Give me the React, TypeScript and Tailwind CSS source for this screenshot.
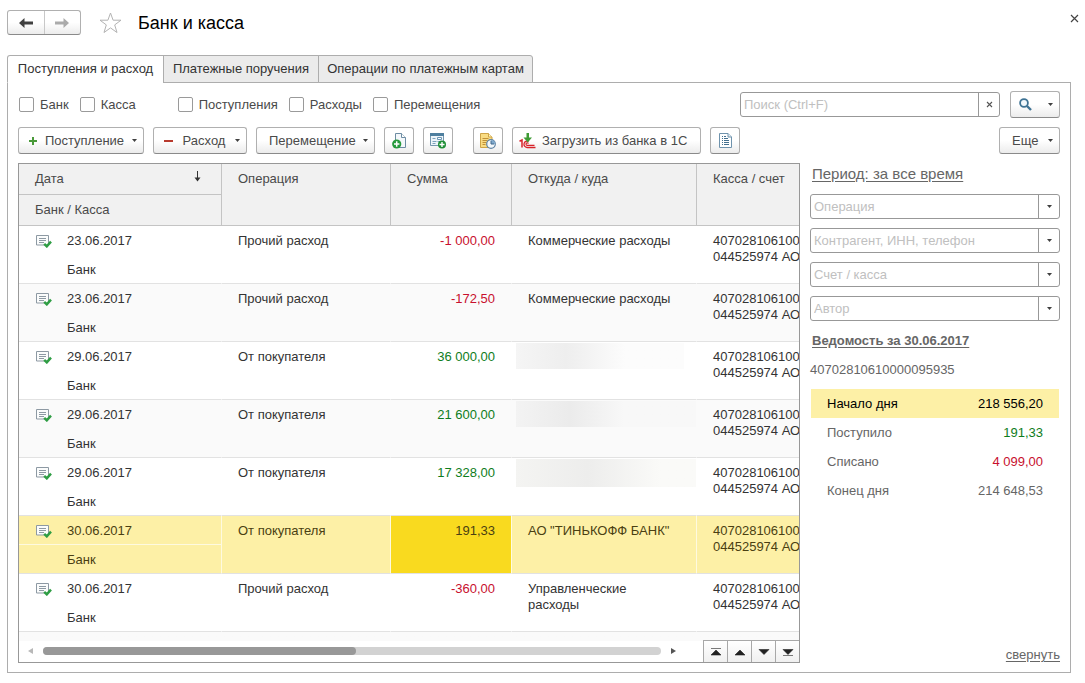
import { useState, type ReactNode } from "react";

type Tone = "in" | "out" | "plain";

interface Entry {
  date: string;
  place: string;
  operation: string;
  amount: string;
  tone: Tone;
  party?: string;
  hidden?: string;
  selected?: boolean;
}

const entries: Entry[] = [
  { date: "23.06.2017", place: "Банк", operation: "Прочий расход", amount: "-1 000,00", tone: "out", party: "Коммерческие расходы" },
  { date: "23.06.2017", place: "Банк", operation: "Прочий расход", amount: "-172,50", tone: "out", party: "Коммерческие расходы" },
  { date: "29.06.2017", place: "Банк", operation: "От покупателя", amount: "36 000,00", tone: "in", hidden: "h-[26px] w-[168px] from-[#f5f5f5] via-[#eeeeee] via-30% to-[#fcfcfc] to-65%" },
  { date: "29.06.2017", place: "Банк", operation: "От покупателя", amount: "21 600,00", tone: "in", hidden: "h-[26px] w-[180px] from-[#f3f3f3] via-[#ebebeb] via-30% to-[#f8f8f8] to-60%" },
  { date: "29.06.2017", place: "Банк", operation: "От покупателя", amount: "17 328,00", tone: "in", hidden: "h-7 w-[180px] from-[#f4f4f2] via-[#ededec] via-40% to-[#fafaf8] to-80%" },
  { date: "30.06.2017", place: "Банк", operation: "От покупателя", amount: "191,33", tone: "plain", party: 'АО "ТИНЬКОФФ БАНК"', selected: true },
  { date: "30.06.2017", place: "Банк", operation: "Прочий расход", amount: "-360,00", tone: "out", party: "Управленческие расходы" },
];

const toneClass: Record<Tone, string> = {
  in: "text-[#0f7d1c]",
  out: "text-[#c8102e]",
  plain: "text-[#4a3f12]",
};

const buttonClass =
  "flex h-[27px] shrink-0 items-center rounded-[3px] border border-[#b0b0b0] border-b-[#8a8a8a] bg-linear-to-b from-white from-50% to-[#ececec] text-[#4a4a4a]";

function Caret() {
  return (
    <svg width="5" height="3" viewBox="0 0 5 3" className="shrink-0" aria-hidden="true">
      <path d="M0 0h5L2.5 3z" fill="#404040" />
    </svg>
  );
}

function NavArrow({ color, flip }: { color: string; flip?: boolean }) {
  return (
    <svg width="14" height="12" viewBox="0 0 14 12" className={flip ? "-scale-x-100" : ""} aria-hidden="true">
      <path d="M0 6 5.5 1v3.6H14v2.8H5.5V11z" fill={color} />
    </svg>
  );
}

function DocAddIcon() {
  return (
    <svg width="15" height="16" viewBox="0 0 15 16" aria-hidden="true">
      <path d="M3.5 8V.5h6l4 4v10H7" fill="#f4f8fb" stroke="#6d8ca3" />
      <path d="M9.5.5v4h4" fill="#fff" stroke="#6d8ca3" />
      <circle cx="4.7" cy="11" r="4.6" fill="#259a3c" />
      <path d="M4.7 8.3v5.400M2 11h5.400" stroke="#fff" strokeWidth="1.5" />
    </svg>
  );
}

function FormAddIcon() {
  return (
    <svg width="17" height="16" viewBox="0 0 17 16" aria-hidden="true">
      <path d="M.5.5h13v12H.5z" fill="#eef5fa" stroke="#7597ae" />
      <path d="M0 0h14v3H0z" fill="#4f7f9f" />
      <path d="M2.5 5.5h3M2.5 8.5h4M2.5 10.5h3M7.5 8.5h4" stroke="#7ca2bc" />
      <path d="M7.5 4.5h4v2h-4z" fill="#fff" stroke="#6c96b4" />
      <circle cx="12" cy="11.5" r="4" fill="#1f8f36" />
      <path d="M12 9v5M9.5 11.5h5" stroke="#fff" strokeWidth="1.4" />
    </svg>
  );
}

function DocClockIcon() {
  return (
    <svg width="16" height="16" viewBox="0 0 16 16" aria-hidden="true">
      <path d="M.5.5h8L12 4v10.5H.5z" fill="#f9dc83" stroke="#cfa548" />
      <path d="M8.500.5V4H12" fill="#fff3c4" stroke="#cfa548" />
      <path d="M2.500 5.500h6M2.500 7.500h5M2.500 9.500h4M2.500 11.500h3" stroke="#c09138" />
      <circle cx="11" cy="11" r="4.300" fill="#f3f8fc" stroke="#5f83a3" strokeWidth="1.200" />
      <path d="M11 11V6.900A4.100 4.100 0 0 1 15.100 11z" fill="#7fa9cd" />
      <path d="M11 8v3h3" fill="none" stroke="#40688c" />
    </svg>
  );
}

function BankImportIcon() {
  return (
    <svg width="17" height="16" viewBox="0 0 17 16" aria-hidden="true">
      <path d="M.5 8.200 3 7v7.500" fill="none" stroke="#d8232a" strokeWidth="1.500" />
      <path d="M9.500 8.400A3.200 3.200 0 1 0 8 14.500H16.500" fill="none" stroke="#d8232a" strokeWidth="1.300" />
      <path d="M9.500 10.600A1.300 1.300 0 1 0 8.200 12.400H15.500" fill="none" stroke="#d8232a" strokeWidth="1.200" />
      <path d="M7.500 0h2.500v4.500h3L8.750 9.500 4.500 4.500h3z" fill="#3f9b35" />
    </svg>
  );
}

function ReportIcon() {
  return (
    <svg width="13" height="15" viewBox="0 0 13 15" aria-hidden="true">
      <path d="M.5.5H9L12.500 4v10.500H.5z" fill="#fff" stroke="#6f93ad" />
      <path d="M9 .5V4h3.500" fill="#e4eef5" stroke="#6f93ad" />
      <path d="M3 3.500h1M5 3.500h2M3 5.500h1M5 5.500h4M3 7.500h1M5 7.500h5M3 9.500h1M5 9.500h5M3 11.500h1M5 11.500h5" stroke="#43708f" />
    </svg>
  );
}

function PostedIcon() {
  return (
    <svg width="16" height="14" viewBox="0 0 16 14" className="block" aria-hidden="true">
      <path d="M.5 1.500h12V11H.5z" fill="#fbfcfc" stroke="#8d99a3" />
      <path d="M3 4.500h7M3 6.500h7M3 8.500h5" stroke="#8d99a3" />
      <path d="m8.200 9.800 2.600 2.600 4.200-4.800" fill="none" stroke="#2f9e44" strokeWidth="2.400" />
    </svg>
  );
}

function Check({ label }: { label: string }) {
  return (
    <label className="flex items-center gap-[6px] text-[#4a4a4a]">
      <input
        type="checkbox"
        className="size-[15px] appearance-none rounded-[2px] border border-[#9a9a9a] bg-white checked:bg-[#7a7a7a]"
      />
      {label}
    </label>
  );
}

function Combo({ label }: { label: string }) {
  return (
    <div className="flex h-[25px] rounded-[3px] border border-[#989898] bg-white">
      <input
        type="text"
        aria-label={label}
        placeholder={label}
        className="min-w-0 flex-1 px-[3px] outline-none placeholder:text-[#c0c0c0]"
      />
      <button type="button" aria-label={`Выбрать: ${label}`} className="flex w-[21px] items-center justify-center border-l border-[#989898]">
        <Caret />
      </button>
    </div>
  );
}

function IconButton({ label, children }: { label: string; children: ReactNode }) {
  return (
    <button type="button" aria-label={label} className={`${buttonClass} w-[30px] justify-center`}>
      {children}
    </button>
  );
}

function EntryRows({ entry, striped }: { entry: Entry; striped: boolean }) {
  const sel = entry.selected;
  const bg = sel ? "bg-[#fdf0a6] text-[#4a3f12]" : striped ? "bg-[#fafafa]" : "bg-white";
  const line = sel ? "border-r border-r-[#fefae0]" : "border-r border-r-transparent";
  const cell = `border-b border-b-[#e2e2e2] pt-[7px] align-top leading-4 ${bg}`;
  return (
    <tbody>
      <tr className="h-[29px]">
        <td className={`border-b p-0 pt-px ${sel ? "border-b-[#fefae0]" : "border-b-transparent"} ${line} ${bg}`}>
          <div className="flex items-center gap-[15px] pl-[17px]">
            <PostedIcon />
            {entry.date}
          </div>
        </td>
        <td rowSpan={2} className={`${cell} ${line} pl-4`}>{entry.operation}</td>
        <td
          rowSpan={2}
          className={`border-b border-b-[#e2e2e2] pt-[7px] pr-4 text-right align-top leading-4 ${line} ${sel ? "bg-[#f9da1f]" : bg} ${toneClass[entry.tone]}`}
        >
          {entry.amount}
        </td>
        <td rowSpan={2} className={entry.hidden ? `border-b border-b-[#e2e2e2] p-0 pt-px pl-1 align-top ${line} ${bg}` : `${cell} ${line} pr-6 pl-4`}>
          {entry.hidden ? <div className={`bg-linear-to-r ${entry.hidden}`} /> : entry.party}
        </td>
        <td rowSpan={2} className={`${cell} pl-4 whitespace-nowrap`}>
          4070281061000
          <br />
          044525974 АО
        </td>
      </tr>
      <tr className="h-[29px]">
        <td className={`border-b border-b-[#e2e2e2] p-0 pt-px pl-12 ${line} ${bg}`}>{entry.place}</td>
      </tr>
    </tbody>
  );
}

const jumps = [
  { label: "В начало", d: "M1 1.500h10M6 3l5 5H1z" },
  { label: "Вверх", d: "M6 3l5 5H1z" },
  { label: "Вниз", d: "M1 2.500h10L6 7.500z" },
  { label: "В конец", d: "M1 2.500h10L6 7.500zM1 8.500h10" },
];

const tabs = ["Поступления и расход", "Платежные поручения", "Операции по платежным картам"];
const tabWidths = ["w-[157px]", "w-[156px]", "w-[215px]"];

const headCell = "border-b border-[#c4c4c4] bg-[#f1f1f1] p-0 pt-[7px] pl-4 text-left align-top leading-4 font-normal";

export default function App() {
  const [tab, setTab] = useState(0);
  return (
    <main className="bg-white pt-[9px] pr-[14px] pb-[10px] pl-[7px] font-['Liberation_Sans',Arial,sans-serif] text-[13px] leading-4 text-[#333]">
      <header className="flex h-[27px] items-center">
        <div className="flex h-[25px] w-[74px] rounded-[3px] border border-[#b0b0b0] border-b-[#8a8a8a] bg-linear-to-b from-white from-50% to-[#ececec]">
          <button type="button" aria-label="Назад" className="flex flex-1 items-center justify-center border-r border-[#c8c8c8]">
            <NavArrow color="#404040" />
          </button>
          <button type="button" aria-label="Вперед" className="flex flex-1 items-center justify-center">
            <NavArrow color="#ababab" flip />
          </button>
        </div>
        <button type="button" aria-label="В избранное" className="ml-[18px]">
          <svg width="23" height="22" viewBox="0 0 23 22" className="block" aria-hidden="true">
            <path d="m11.500 1 2.600 7.200H22l-6.300 4.700 2.300 7.600-6.500-4.600L5 20.500l2.300-7.600L1 8.200h7.900z" fill="#fff" stroke="#b3b3b3" />
          </svg>
        </button>
        <h1 className="ml-4 text-[18px] leading-6 text-black">Банк и касса</h1>
        <button type="button" aria-label="Закрыть" className="-mr-2 mb-2 ml-auto">
          <svg width="9" height="9" viewBox="0 0 9 9" className="block" aria-hidden="true">
            <path d="m1 1 7 7M8 1 1 8" stroke="#444" strokeWidth="1.200" />
          </svg>
        </button>
      </header>

      <div role="tablist" className="relative z-10 mt-[19px] -mb-px flex">
        {tabs.map((name, i) => (
          <button
            key={name}
            type="button"
            role="tab"
            aria-selected={tab === i}
            onClick={() => setTab(i)}
            className={`h-7 border border-[#adadad] whitespace-nowrap text-[#333] ${tabWidths[i]} ${i > 0 ? "-ml-px" : "rounded-tl-[3px]"} ${i === 2 ? "rounded-tr-[3px]" : ""} ${tab === i ? "border-b-white bg-white" : "bg-[#ebebeb]"}`}
          >
            {name}
          </button>
        ))}
      </div>

      <section className="border border-[#adadad] pt-2 pr-[10px] pb-[9px] pl-[10px]">
        <div className="flex h-[27px] items-center">
          <div className="flex items-center gap-[11px] pl-px">
            <Check label="Банк" />
            <Check label="Касса" />
          </div>
          <div className="ml-[42px] flex items-center gap-[11px]">
            <Check label="Поступления" />
            <Check label="Расходы" />
            <Check label="Перемещения" />
          </div>
          <div className="ml-auto flex h-[25px] w-[260px] rounded-[3px] border border-[#989898]">
            <input type="text" aria-label="Поиск" placeholder="Поиск (Ctrl+F)" className="min-w-0 flex-1 px-[3px] outline-none placeholder:text-[#c0c0c0]" />
            <button type="button" aria-label="Очистить" className="flex w-[21px] items-center justify-center border-l border-[#989898]">
              <svg width="7" height="7" viewBox="0 0 7 7" aria-hidden="true">
                <path d="m1 1 5 5M6 1 1 6" stroke="#555" strokeWidth="1.100" />
              </svg>
            </button>
          </div>
          <button type="button" aria-label="Найти" className={`${buttonClass} ml-[10px] w-[50px] justify-between pr-[6px] pl-2`}>
            <svg width="13" height="13" viewBox="0 0 13 13" aria-hidden="true">
              <circle cx="5" cy="5" r="3.900" fill="#f2f8fc" stroke="#3f7394" strokeWidth="1.800" />
              <path d="m8 8 4 4" stroke="#3f7394" strokeWidth="2.400" />
            </svg>
            <Caret />
          </button>
        </div>

        <div className="mt-[9px] flex items-center">
          <button type="button" className={`${buttonClass} w-[126px] justify-between pr-[6px] pl-[10px]`}>
            <svg width="8" height="8" viewBox="0 0 8 8" aria-hidden="true"><path d="M4 0v8M0 4h8" stroke="#4a9a3a" strokeWidth="2" /></svg>
            Поступление
            <Caret />
          </button>
          <button type="button" className={`${buttonClass} ml-[9px] w-[94px] justify-between pr-[6px] pl-[10px]`}>
            <svg width="9" height="2" viewBox="0 0 9 2" aria-hidden="true"><path d="M0 1h9" stroke="#b83a2e" strokeWidth="2" /></svg>
            Расход
            <Caret />
          </button>
          <button type="button" className={`${buttonClass} ml-[9px] w-[119px] justify-between pr-[6px] pl-3`}>
            Перемещение
            <Caret />
          </button>
          <div className="ml-[9px] flex gap-[9px]">
            <IconButton label="Создать копированием"><DocAddIcon /></IconButton>
            <IconButton label="Создать по шаблону"><FormAddIcon /></IconButton>
          </div>
          <div className="ml-5 flex gap-[9px]">
            <IconButton label="Журнал"><DocClockIcon /></IconButton>
            <button type="button" className={`${buttonClass} w-[189px] gap-[6px] pl-[6px] whitespace-nowrap`}>
              <BankImportIcon />
              Загрузить из банка в 1С
            </button>
            <IconButton label="Отчет"><ReportIcon /></IconButton>
          </div>
          <button type="button" className={`${buttonClass} ml-auto w-[61px] justify-between pr-[6px] pl-3`}>
            Еще
            <Caret />
          </button>
        </div>

        <div className="mt-[9px] flex gap-[10px]">
          <div className="min-w-0 flex-1 overflow-hidden border border-[#989898]">
            <table className="w-full table-fixed border-separate border-spacing-0">
              <colgroup>
                <col className="w-[203px]" />
                <col className="w-[169px]" />
                <col className="w-[121px]" />
                <col className="w-[185px]" />
                <col />
              </colgroup>
              <thead className="text-[#4a4a4a]">
                <tr className="h-[31px]">
                  <th scope="col" className={`${headCell} border-r`}>
                    <div className="flex justify-between pr-5">
                      Дата
                      <svg width="7" height="11" viewBox="0 0 7 11" aria-hidden="true">
                        <path d="M3.500 0v9" stroke="#333" />
                        <path d="M.5 6.500h6l-3 4z" fill="#333" />
                      </svg>
                    </div>
                  </th>
                  <th scope="col" rowSpan={2} className={`${headCell} border-r`}>Операция</th>
                  <th scope="col" rowSpan={2} className={`${headCell} border-r`}>Сумма</th>
                  <th scope="col" rowSpan={2} className={`${headCell} border-r`}>Откуда / куда</th>
                  <th scope="col" rowSpan={2} className={headCell}>Касса / счет</th>
                </tr>
                <tr className="h-[31px]">
                  <th scope="col" className={`${headCell} border-r`}>Банк / Касса</th>
                </tr>
              </thead>
              {entries.map((entry, i) => (
                <EntryRows key={i} entry={entry} striped={i % 2 === 1} />
              ))}
            </table>
            <div className="flex h-[30px] items-end bg-linear-to-b from-[#fafafa] from-30% to-white to-30%">
              <div className="flex h-[22px] flex-1 items-center pr-[27px] pl-[9px]">
                <button type="button" aria-label="Влево">
                  <svg width="5" height="6" viewBox="0 0 5 6" className="block" aria-hidden="true"><path d="M5 0v6L0 3z" fill="#b8b8b8" /></svg>
                </button>
                <div className="mx-[10px] h-2 flex-1 rounded-full bg-[#d2d2d2]">
                  <div className="h-2 w-[313px] rounded-full bg-[#989898]" />
                </div>
                <button type="button" aria-label="Вправо">
                  <svg width="5" height="6" viewBox="0 0 5 6" className="block" aria-hidden="true"><path d="M0 0v6l5-3z" fill="#555" /></svg>
                </button>
              </div>
              {jumps.map((jump) => (
                <button
                  key={jump.label}
                  type="button"
                  aria-label={jump.label}
                  className="flex h-[22px] w-6 items-center justify-center border-t border-l border-[#a8a8a8] bg-linear-to-b from-white to-[#f0f0f0]"
                >
                  <svg width="12" height="10" viewBox="0 0 12 10" aria-hidden="true">
                    <path d={jump.d} fill="#222" stroke="#222" strokeWidth="0.600" />
                  </svg>
                </button>
              ))}
            </div>
          </div>

          <aside className="flex w-[250px] shrink-0 flex-col text-[#666]">
            <a href="#period" className="ml-[2px] self-start text-[15px] leading-[22px] underline underline-offset-2">Период: за все время</a>
            <div className="mt-[9px] flex flex-col gap-[9px] text-[#333]">
              <Combo label="Операция" />
              <Combo label="Контрагент, ИНН, телефон" />
              <Combo label="Счет / касса" />
              <Combo label="Автор" />
            </div>
            <a href="#statement" className="mt-3 ml-[2px] self-start font-bold underline underline-offset-2">Ведомость за 30.06.2017</a>
            <p className="mt-[13px]">40702810610000095935</p>
            <table className="mt-[11px] ml-px w-[248px] border-separate border-spacing-0">
              <tbody>
                <tr className="h-[29px] bg-[#fdf0a6] text-black">
                  <th scope="row" className="p-0 pl-4 text-left font-normal">Начало дня</th>
                  <td className="p-0 pr-4 text-right">218 556,20</td>
                </tr>
                <tr className="h-[29px]">
                  <th scope="row" className="p-0 pl-4 text-left font-normal">Поступило</th>
                  <td className="p-0 pr-4 text-right text-[#0f7d1c]">191,33</td>
                </tr>
                <tr className="h-[29px]">
                  <th scope="row" className="p-0 pl-4 text-left font-normal">Списано</th>
                  <td className="p-0 pr-4 text-right text-[#c8102e]">4 099,00</td>
                </tr>
                <tr className="h-[29px]">
                  <th scope="row" className="p-0 pl-4 text-left font-normal">Конец дня</th>
                  <td className="p-0 pr-4 text-right">214 648,53</td>
                </tr>
              </tbody>
            </table>
            <a href="#collapse" className="mt-auto self-end underline underline-offset-2">свернуть</a>
          </aside>
        </div>
      </section>
    </main>
  );
}
